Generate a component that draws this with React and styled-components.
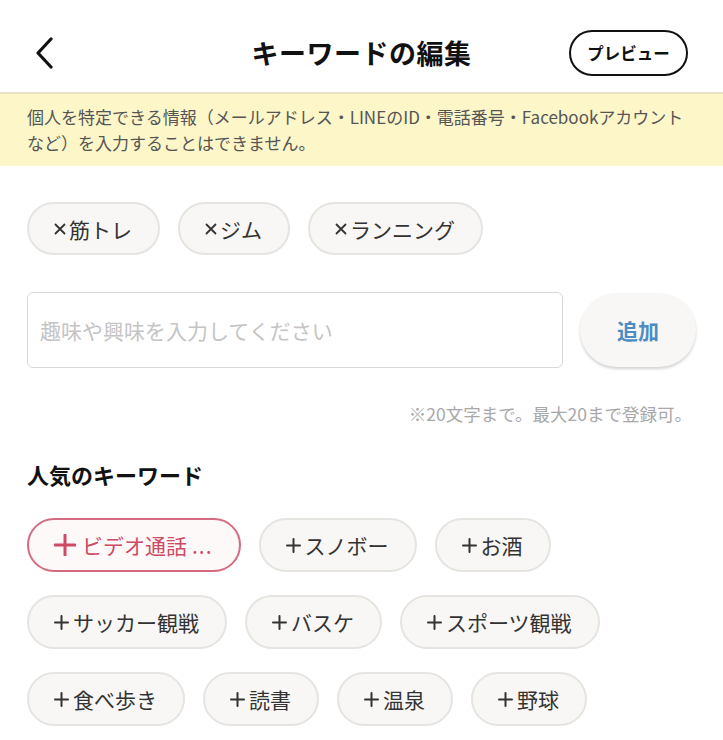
import React from 'react';
import styled, { createGlobalStyle } from 'styled-components';

const GlobalStyle = createGlobalStyle`
    html, body {
        margin: 0;
        padding: 0;
        background: #ffffff;
    }
    body {
        font-family: "Noto Sans CJK JP", "Noto Sans", sans-serif;
        color: #222;
    }
`;

const Page = styled.div`
    width: 723px;
    height: 740px;
    overflow: hidden;
    background: #fff;
`;

const Header = styled.header`
    height: 92px;
    display: flex;
    align-items: center;
    justify-content: space-between;
    padding: 13px 35px 0 34px;
    box-sizing: border-box;
    position: relative;
`;

const BackButton = styled.button`
    width: 34px;
    height: 40px;
    padding: 0;
    border: none;
    background: none;
    display: flex;
    align-items: center;
    justify-content: flex-start;
`;

const Title = styled.h1`
    position: absolute;
    left: 0;
    right: 0;
    top: 13px;
    bottom: 0;
    margin: 0;
    display: flex;
    align-items: center;
    justify-content: center;
    font-size: 27px;
    font-weight: 700;
    color: #111;
    pointer-events: none;
    letter-spacing: 0.5px;
`;

const PreviewButton = styled.button`
    width: 119px;
    height: 46px;
    border: 2px solid #111;
    border-radius: 23px;
    background: #fff;
    font-family: inherit;
    font-size: 16.5px;
    font-weight: 700;
    color: #111;
    padding: 0;
`;

const Notice = styled.div`
    background: #fcf6c8;
    border-top: 2px solid #e6e0c4;
    padding: 10px 27px 10px;
    font-size: 17px;
    line-height: 26px;
    color: #555;
`;

const Body = styled.div`
    padding: 0 27px;
`;

const TagList = styled.div`
    display: flex;
    flex-wrap: wrap;
    gap: ${props => props.rowGap || 19}px 18px;
    margin-top: ${props => props.top || 0}px;
`;

const Tag = styled.button`
    height: ${props => props.tall ? 54 : 53}px;
    padding: 0 26px 0 25px;
    border-radius: 27px;
    border: 2px solid ${props => props.active ? '#d46b80' : '#e6e4e1'};
    background: ${props => props.active ? '#fdf9f8' : '#f8f7f5'};
    color: ${props => props.active ? '#cf4a64' : '#333'};
    font-family: inherit;
    font-size: 21px;
    display: flex;
    align-items: center;
    box-sizing: border-box;
    white-space: nowrap;
`;

const MarkIcon = styled.svg`
    flex: none;
    margin-right: ${props => props.gap}px;
`;

const Ellipsis = styled.span`
    margin-left: 5px;
    letter-spacing: 1px;
`;

const InputRow = styled.div`
    display: flex;
    align-items: center;
    gap: 17px;
    margin-top: 37px;
`;

const TextInput = styled.input`
    width: 537px;
    height: 76px;
    box-sizing: border-box;
    border: 1px solid #d8d8d8;
    border-radius: 6px;
    padding: 0 12px;
    font-family: inherit;
    font-size: 21px;
    color: #333;
    outline: none;

    &::placeholder {
        color: #c4c4c4;
    }
`;

const AddButton = styled.button`
    width: 116px;
    height: 74px;
    border: none;
    border-radius: 37px;
    background: #f8f7f5;
    box-shadow: 0 2px 3px rgba(0, 0, 0, 0.18);
    font-family: inherit;
    font-size: 21px;
    font-weight: 700;
    color: #4c8cc4;
`;

const Hint = styled.p`
    margin: 33px 4px 0 0;
    text-align: right;
    font-size: 17.5px;
    color: #a8a8a8;
`;

const SectionTitle = styled.h2`
    margin: 32px 0 0;
    font-size: 22px;
    font-weight: 700;
    color: #111;
`;

const Cross = () => (
    <MarkIcon width="12" height="12" viewBox="0 0 12 12" gap={3}>
        <path d="M1.5 1.5 L10.5 10.5 M10.5 1.5 L1.5 10.5" stroke="currentColor" strokeWidth="1.8" strokeLinecap="round" />
    </MarkIcon>
);

const Plus = ({ big }) => big ? (
    <MarkIcon width="22" height="22" viewBox="0 0 22 22" gap={6}>
        <path d="M11 1 V21 M1 11 H21" stroke="currentColor" strokeWidth="3" strokeLinecap="round" />
    </MarkIcon>
) : (
    <MarkIcon width="15" height="15" viewBox="0 0 15 15" gap={4}>
        <path d="M7.5 1 V14 M1 7.5 H14" stroke="currentColor" strokeWidth="2" strokeLinecap="round" />
    </MarkIcon>
);

const selected = ['筋トレ', 'ジム', 'ランニング'];
const popular = ['スノボー', 'お酒', 'サッカー観戦', 'バスケ', 'スポーツ観戦', '食べ歩き', '読書', '温泉', '野球'];

const App = () => {
    return (
        <Page>
            <GlobalStyle />
            <Header>
                <BackButton aria-label="戻る">
                    <svg width="22" height="32" viewBox="0 0 22 32">
                        <path d="M17 2 L4 16 L17 30" fill="none" stroke="#111" strokeWidth="3.2" strokeLinecap="round" strokeLinejoin="round" />
                    </svg>
                </BackButton>
                <Title>キーワードの編集</Title>
                <PreviewButton>プレビュー</PreviewButton>
            </Header>
            <Notice>
                個人を特定できる情報（メールアドレス・LINEのID・電話番号・Facebookアカウントなど）を入力することはできません。
            </Notice>
            <Body>
                <TagList top={36}>
                    {selected.map(name => (
                        <Tag key={name}><Cross />{name}</Tag>
                    ))}
                </TagList>
                <InputRow>
                    <TextInput placeholder="趣味や興味を入力してください" />
                    <AddButton>追加</AddButton>
                </InputRow>
                <Hint>※20文字まで。最大20まで登録可。</Hint>
                <SectionTitle>人気のキーワード</SectionTitle>
                <TagList top={28} rowGap={23}>
                    <Tag tall active><Plus big />ビデオ通話<Ellipsis>...</Ellipsis></Tag>
                    {popular.map(name => (
                        <Tag tall key={name}><Plus />{name}</Tag>
                    ))}
                </TagList>
            </Body>
        </Page>
    );
};

export default App;
